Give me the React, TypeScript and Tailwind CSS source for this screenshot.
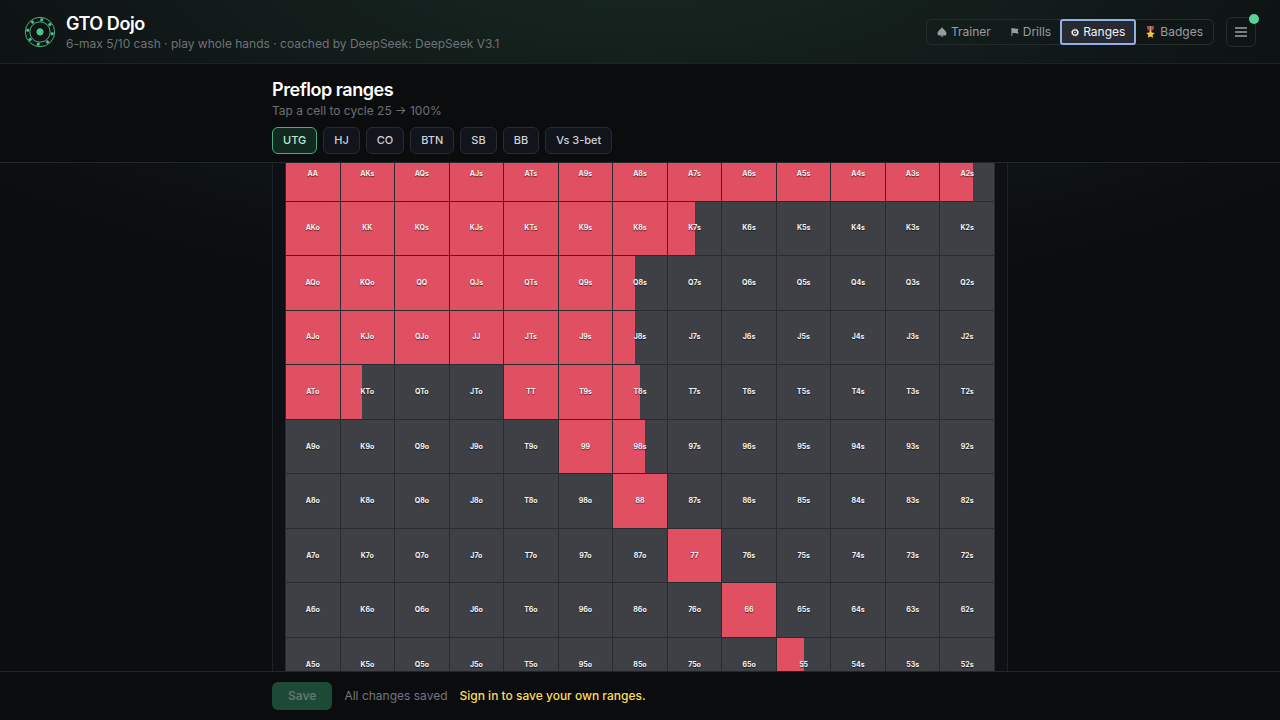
import { useEffect, useRef, useState } from "react"
import { clsx } from "clsx"

const RANKS = ["A", "K", "Q", "J", "T", "9", "8", "7", "6", "5", "4", "3", "2"]
const POSITIONS = ["UTG", "HJ", "CO", "BTN", "SB", "BB", "Vs 3-bet"]

const UTG_RANGE: Record<string, number> = {
  AA: 100, AKs: 100, AQs: 100, AJs: 100, ATs: 100, A9s: 100, A8s: 100, A7s: 100,
  A6s: 100, A5s: 100, A4s: 100, A3s: 100, A2s: 60,
  AKo: 100, KK: 100, KQs: 100, KJs: 100, KTs: 100, K9s: 100, K8s: 100, K7s: 50,
  AQo: 100, KQo: 100, QQ: 100, QJs: 100, QTs: 100, Q9s: 100, Q8s: 40,
  AJo: 100, KJo: 100, QJo: 100, JJ: 100, JTs: 100, J9s: 100, J8s: 40,
  ATo: 100, KTo: 40, TT: 100, T9s: 100, T8s: 50,
  "99": 100, "98s": 60, "88": 100, "77": 100, "66": 100, "55": 50,
}

function handAt(row: number, col: number) {
  if (row === col) return RANKS[row] + RANKS[row]
  return row < col ? RANKS[row] + RANKS[col] + "s" : RANKS[col] + RANKS[row] + "o"
}

function ChipLogo() {
  const notches = [0, 1, 2, 3, 4, 5, 6, 7]
  return (
    <svg viewBox="0 0 32 32" className="size-8 text-[#4fc38a]" fill="none" stroke="currentColor" aria-hidden="true">
      <circle cx="16" cy="16" r="14.7" strokeWidth="0.9" />
      <circle cx="16" cy="16" r="10.2" strokeWidth="0.9" />
      {notches.map((n) => (
        <rect
          key={n}
          x="14.6"
          y="2.2"
          width="2.8"
          height="2.8"
          fill="currentColor"
          stroke="none"
          transform={`rotate(${8 + n * 45} 16 16)`}
        />
      ))}
      <path
        d="M16 12.3c-1.9 0-3.5 1.7-3.5 3.7s1.4 3.5 3.2 3.2v.6h.7v-.6c1.8.3 3.1-1.2 3.1-3.2s-1.6-3.7-3.5-3.7Z"
        fill="currentColor"
        stroke="none"
      />
    </svg>
  )
}

function SpadeIcon() {
  return (
    <svg viewBox="0 0 10 12" className="h-3 w-2.5" fill="currentColor" aria-hidden="true">
      <path d="M5 1C4.3 3 .5 5 .5 7.4c0 2.2 2.6 2.7 3.9 1.5-.1.8-.4 1.2-1 1.6h3.2c-.6-.4-.9-.8-1-1.6 1.3 1.2 3.9.7 3.9-1.5C9.5 5 5.7 3 5 1Z" />
    </svg>
  )
}

function FlagIcon() {
  return (
    <svg viewBox="0 0 8 12" className="h-3 w-2" fill="currentColor" aria-hidden="true">
      <path d="M.4 2h.9v.5c1.9-.6 2.8.8 6.3.2L6.6 5l1 2.3c-3.2.6-4.4-.7-6.3-.1V10H.4Z" />
    </svg>
  )
}

function GearIcon() {
  return (
    <svg viewBox="0 0 8 12" className="h-3 w-2" fill="none" stroke="currentColor" aria-hidden="true">
      <circle cx="4" cy="6.5" r="2.7" strokeWidth="1.3" />
      <circle cx="4" cy="6.5" r="3.5" strokeWidth="0.7" strokeDasharray="1.1 1.1" />
      <circle cx="4" cy="6.5" r="0.8" fill="currentColor" stroke="none" />
    </svg>
  )
}

function MedalIcon() {
  return (
    <svg viewBox="0 0 11 13" className="h-[13px] w-[11px]" aria-hidden="true">
      <path d="M2 1h7v2.4L6.500 6.500h-2L2 3.400Z" fill="#a34a50" />
      <path d="M4.900 1h1.200v5H4.900Z" fill="#c98a83" />
      <path d="M5.500 5l1.300 2.500 3 .4-2.200 2 .6 2.900-2.700-1.400-2.700 1.400.6-2.900-2.200-2 3-.4Z" fill="#e9c542" />
    </svg>
  )
}

const NAV = [
  { label: "Trainer", icon: <SpadeIcon /> },
  { label: "Drills", icon: <FlagIcon /> },
  { label: "Ranges", icon: <GearIcon /> },
  { label: "Badges", icon: <MedalIcon /> },
]

function Header() {
  return (
    <header className="flex h-16 shrink-0 items-center justify-between border-b border-[#1d2225] px-6">
      <div className="flex items-center gap-2.5">
        <ChipLogo />
        <div>
          <h1 className="text-lg leading-6 font-semibold tracking-tight text-white">GTO Dojo</h1>
          <p className="text-xs leading-4 text-[#6e7377]">
            6-max 5/10 cash · play whole hands · coached by DeepSeek: DeepSeek V3.1
          </p>
        </div>
      </div>
      <div className="flex items-center gap-3">
        <nav className="flex rounded-md border border-[#262b2e]">
          {NAV.map(({ label, icon }) => (
            <button
              key={label}
              className={clsx(
                "flex h-6 items-center gap-1 px-2.5 text-xs",
                label === "Ranges"
                  ? "rounded-xs bg-[#272a33] text-[#f1f2f4] outline-2 -outline-offset-1 outline-[#93afe6]"
                  : "text-[#999da1]"
              )}
            >
              {icon}
              {label}
            </button>
          ))}
        </nav>
        <button
          aria-label="Menu"
          className="relative flex size-[30px] items-center justify-center rounded-md border border-[#262b2e] text-[#e4e6e8]"
        >
          <svg viewBox="0 0 12 10" className="h-2.5 w-3" stroke="currentColor" aria-hidden="true">
            <path d="M0 1h12M0 5h12M0 9h12" strokeWidth="1.2" />
          </svg>
          <span className="absolute -top-1 -right-1 size-2.5 rounded-full bg-[#57d39a]" />
        </button>
      </div>
    </header>
  )
}

export default function App() {
  const [range, setRange] = useState(UTG_RANGE)
  const [position, setPosition] = useState("UTG")
  const scroller = useRef<HTMLDivElement>(null)

  useEffect(() => {
    scroller.current?.scrollTo(0, 46)
  }, [])

  const cycle = (hand: string) => {
    const next = ((range[hand] ?? 0) + 25) % 125
    setRange({ ...range, [hand]: next })
  }

  return (
    <div className="flex h-screen flex-col bg-[#0b0d0f] bg-[radial-gradient(1200px_500px_at_50%_-10%,#192a24,#0b0d0f_74%)] font-['Inter',sans-serif] text-white">
      <Header />

      <section className="shrink-0 border-b border-[#24272a] bg-[#0b0c0e]">
        <div className="mx-auto max-w-[736px] pt-3.5 pb-2">
          <h2 className="text-lg leading-6 font-semibold tracking-tight">Preflop ranges</h2>
          <p className="mt-px text-xs leading-4 text-[#6c7075]">Tap a cell to cycle 25 → 100%</p>
          <div className="mt-2 flex gap-1.5">
            {POSITIONS.map((name) => (
              <button
                key={name}
                onClick={() => setPosition(name)}
                className={clsx(
                  "rounded-md border px-2.5 py-1 text-[11px] leading-[17px] font-medium",
                  name === position
                    ? "border-[#45ae7a] bg-[#12291f] text-[#b5efd0]"
                    : "border-[#282b31] bg-[#11141a] text-[#cfd1d5]"
                )}
              >
                {name}
              </button>
            ))}
          </div>
        </div>
      </section>

      <main ref={scroller} className="min-h-0 flex-1 overflow-y-auto [scrollbar-width:none]">
        <div className="mx-auto max-w-[736px] py-4">
          <div className="border border-[#1f2327] bg-[#0d1015] p-3">
            <div className="grid grid-cols-13 gap-px bg-[#2a2b31] p-px">
              {RANKS.map((_, row) =>
                RANKS.map((_, col) => {
                  const hand = handAt(row, col)
                  return (
                    <button
                      key={hand}
                      onClick={() => cycle(hand)}
                      className="relative flex aspect-square items-center justify-center bg-[#3f4046]"
                    >
                      <span
                        className="absolute inset-y-0 left-0 bg-[#e14f62]"
                        style={{ width: `${range[hand] ?? 0}%` }}
                      />
                      <span className="relative text-[7px] leading-[8px] font-bold text-[#f4f4f5] text-shadow-[0_1px_1px_rgb(0_0_0/0.6)]">
                        {hand}
                      </span>
                    </button>
                  )
                })
              )}
            </div>
          </div>
        </div>
      </main>

      <footer className="shrink-0 border-t border-[#24272a] bg-[#0b0c0e]">
        <div className="mx-auto flex max-w-[736px] items-center gap-3 py-2.5 text-xs">
          <button disabled className="rounded-md bg-[#1d4a36] px-4 py-1.5 leading-4 font-semibold text-[#62756c]">
            Save
          </button>
          <span className="text-[#73777c]">All changes saved</span>
          <a href="#signin" className="font-medium text-[#fbdc55]">
            Sign in to save your own ranges.
          </a>
        </div>
      </footer>
    </div>
  )
}
